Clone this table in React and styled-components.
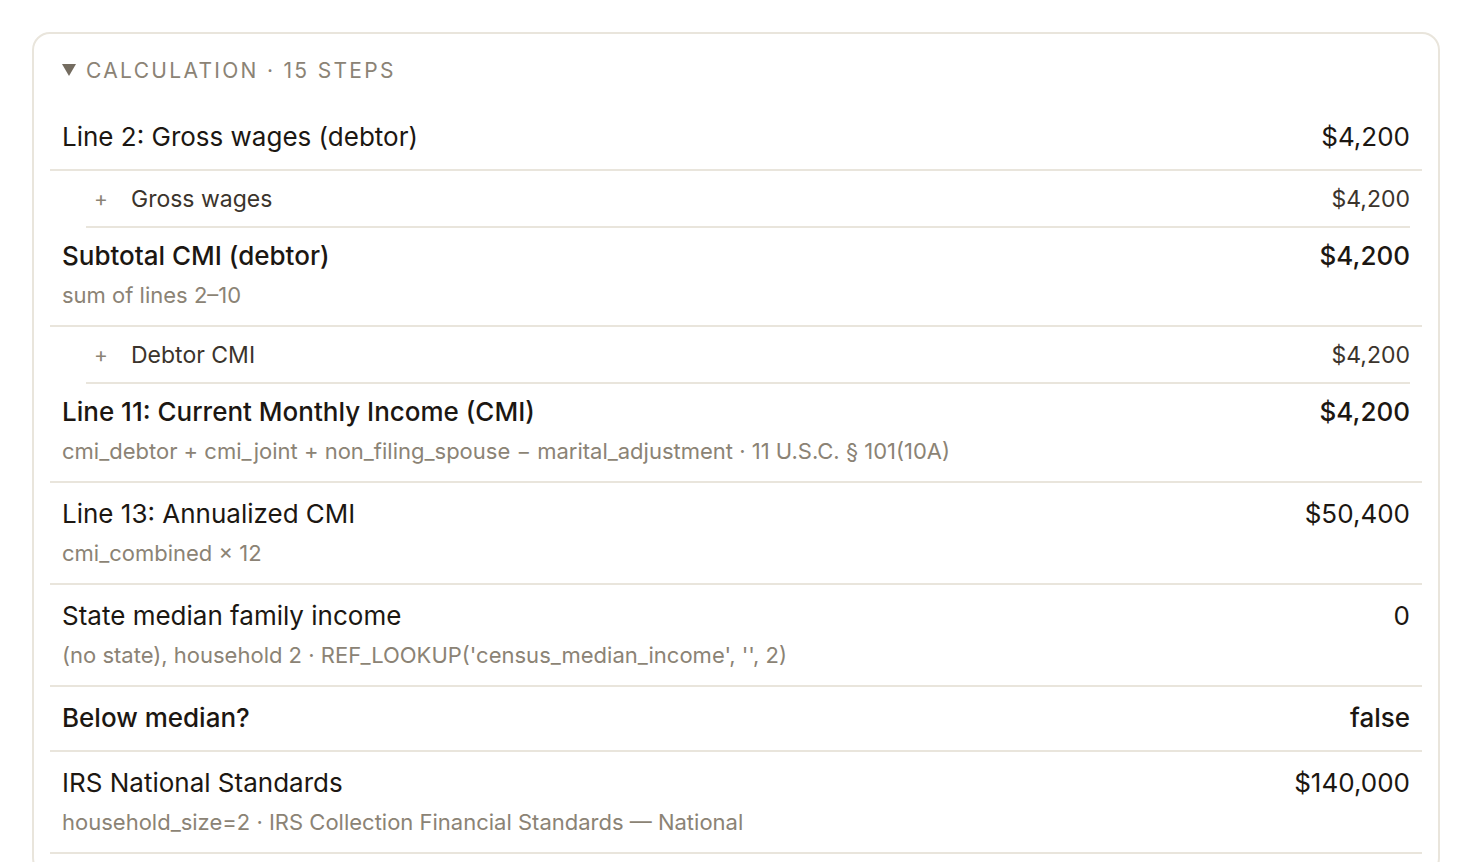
import React from "react";
import styled, { createGlobalStyle } from "styled-components";

const Global = createGlobalStyle`
  html, body { margin: 0; padding: 0; background: #ffffff; }
  body { font-family: Inter, "Noto Sans", sans-serif; color: #1f1a14; }
`;

const Page = styled.div`
  padding: 32px 32px 0 32px;
`;

const Card = styled.section`
  border: 2px solid #e9e5dc;
  border-radius: 18px;
  padding: 22px 16px 20px;
  background: #fff;
`;

const Header = styled.div`
  display: flex;
  align-items: center;
  gap: 10px;
  padding: 0 12px;
  height: 28px;
  margin-bottom: 22px;
  font-size: 21px;
  letter-spacing: 0.11em;
  text-transform: uppercase;
  color: #8b8375;
`;

const Caret = styled.svg`
  width: 14px;
  height: 12px;
  flex: none;
  fill: #746c60;
`;

const Row = styled.div`
  display: flex;
  justify-content: space-between;
  align-items: flex-start;
  padding: ${(p) => (p.$afterChild ? "11px" : "14px")} 12px 15px;
  border-bottom: 2px solid #e9e5dc;
`;

const Main = styled.div`
  display: flex;
  flex-direction: column;
  gap: 7px;
`;

const Title = styled.div`
  font-size: 26px;
  line-height: 34px;
  font-weight: ${(p) => (p.$strong ? 500 : 400)};
  color: #1c1712;
`;

const Note = styled.div`
  font-size: 22px;
  line-height: 30px;
  color: #8b8375;
`;

const Value = styled.div`
  font-size: 26px;
  line-height: 34px;
  font-weight: ${(p) => (p.$strong ? 500 : 400)};
  color: #1c1712;
`;

const SubRow = styled.div`
  display: flex;
  align-items: center;
  margin: 0 12px 0 36px;
  padding: 13px 0 12px 8px;
  border-bottom: 2px solid #e9e5dc;
  font-size: 23px;
  line-height: 30px;
  color: #3b342c;
`;

const Plus = styled.span`
  width: 12px;
  text-align: center;
  font-size: 21px;
  color: #8b8375;
  margin-right: 25px;
`;

const SubLabel = styled.span`
  flex: 1;
`;

const SubValue = styled.span`
  color: #3b342c;
`;

const steps = [
  { title: "Line 2: Gross wages (debtor)", value: "$4,200", children: [{ label: "Gross wages", value: "$4,200" }] },
  { title: "Subtotal CMI (debtor)", value: "$4,200", strong: true, note: "sum of lines 2–10", children: [{ label: "Debtor CMI", value: "$4,200" }] },
  { title: "Line 11: Current Monthly Income (CMI)", value: "$4,200", strong: true, note: "cmi_debtor + cmi_joint + non_filing_spouse − marital_adjustment · 11 U.S.C. § 101(10A)" },
  { title: "Line 13: Annualized CMI", value: "$50,400", note: "cmi_combined × 12" },
  { title: "State median family income", value: "0", note: "(no state), household 2 · REF_LOOKUP('census_median_income', '', 2)" },
  { title: "Below median?", value: "false", strong: true },
  { title: "IRS National Standards", value: "$140,000", note: "household_size=2 · IRS Collection Financial Standards — National" },
];

export default function App() {
  let prevChild = false;
  return (
    <Page>
      <Global />
      <Card>
        <Header>
          <Caret viewBox="0 0 14 12"><path d="M0 0 H14 L7 12 Z" /></Caret>
          <span>Calculation · 15 steps</span>
        </Header>
        {steps.map((s, i) => {
          const after = prevChild;
          prevChild = !!s.children;
          return (
            <React.Fragment key={i}>
              <Row $afterChild={after}>
                <Main>
                  <Title $strong={s.strong}>{s.title}</Title>
                  {s.note && <Note>{s.note}</Note>}
                </Main>
                <Value $strong={s.strong}>{s.value}</Value>
              </Row>
              {s.children &&
                s.children.map((c, j) => (
                  <SubRow key={j}>
                    <Plus>+</Plus>
                    <SubLabel>{c.label}</SubLabel>
                    <SubValue>{c.value}</SubValue>
                  </SubRow>
                ))}
            </React.Fragment>
          );
        })}
      </Card>
    </Page>
  );
}
